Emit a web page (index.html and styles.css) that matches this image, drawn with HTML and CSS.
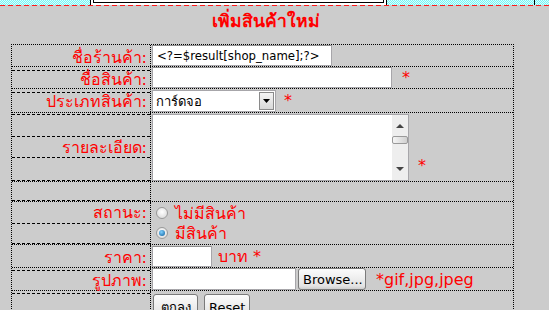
FILE: index.html
```html
<!DOCTYPE html>
<html lang="th">
<head>
<meta charset="utf-8">
<title>เพิ่มสินค้าใหม่</title>
<link rel="stylesheet" href="styles.css">
</head>
<body>
<div class="topbar">
  <div class="tb-cyan tb-left"></div>
  <div class="tb-box"><div class="tb-inner"></div></div>
  <div class="tb-cyan tb-mid"></div>
  <div class="tb-cyan tb-right"></div>
</div>
<div class="title">เพิ่มสินค้าใหม่</div>
<form class="form">
  <div class="row r1">
    <div class="lbl"><div class="lc grow">ชื่อร้านค้า:</div></div>
    <div class="fld"><input class="txt w-shop" type="text" value="<?=$result[shop_name];?>"></div>
  </div>
  <div class="row r2">
    <div class="lbl"><div class="lc grow">ชื่อสินค้า:</div></div>
    <div class="fld"><input class="txt w-name" type="text"><span class="star s-name">*</span></div>
  </div>
  <div class="row r3">
    <div class="lbl"><div class="lc grow">ประเภทสินค้า:</div></div>
    <div class="fld">
      <div class="select"><span class="sel-text">การ์ดจอ</span><span class="sel-btn"><svg width="9" height="5" viewBox="0 0 9 5"><path d="M1 0h7L4.5 4z" fill="#000"/></svg></span></div>
      <span class="star s-type">*</span>
    </div>
  </div>
  <div class="row r4">
    <div class="lbl">
      <div class="lc sub-a"></div>
      <div class="lc sub-b">รายละเอียด:</div>
      <div class="lc grow last"></div>
    </div>
    <div class="fld fld-top">
      <div class="tarea">
        <textarea class="ta"></textarea>
        <div class="sbar">
          <span class="sb-up"></span>
          <span class="sb-thumb"></span>
          <span class="sb-down"></span>
        </div>
      </div>
      <span class="star s-desc">*</span>
    </div>
  </div>
  <div class="row r5">
    <div class="lbl"><div class="lc grow"></div></div>
    <div class="fld"></div>
  </div>
  <div class="row r6">
    <div class="lbl">
      <div class="lc st-a">สถานะ:</div>
      <div class="lc grow last"></div>
    </div>
    <div class="fld fld-col">
      <label class="radio-line"><span class="radio"></span><span class="rtext">ไม่มีสินค้า</span></label>
      <label class="radio-line"><span class="radio on"></span><span class="rtext">มีสินค้า</span></label>
    </div>
  </div>
  <div class="row r7">
    <div class="lbl"><div class="lc grow">ราคา:</div></div>
    <div class="fld"><input class="txt w-price" type="text"><span class="unit">บาท *</span></div>
  </div>
  <div class="row r8">
    <div class="lbl"><div class="lc grow">รูปภาพ:</div></div>
    <div class="fld"><span class="txt w-file"></span><button type="button" class="btn b-browse">Browse...</button><span class="hint">*gif,jpg,jpeg</span></div>
  </div>
  <div class="row r9">
    <div class="lbl"><div class="lc grow nob"></div></div>
    <div class="fld fld-top"><button type="submit" class="btn b-ok">ตกลง</button><button type="reset" class="btn b-reset">Reset</button></div>
  </div>
</form>
</body>
</html>
```
FILE: styles.css
```css
html, body {
  margin: 0;
  padding: 0;
  background: #cccccc;
  overflow: hidden;
}
body {
  width: 549px;
  height: 310px;
  font-family: Tahoma, "DejaVu Sans", "Noto Sans", sans-serif;
}

/* top strip */
.topbar {
  display: flex;
  height: 5px;
  padding-bottom: 1px;
  background-image: repeating-linear-gradient(90deg, #ff1a1a 0 5px, transparent 5px 8px);
  background-size: 100% 1px;
  background-position: 0 5px;
  background-repeat: no-repeat;
}
.tb-cyan {
  height: 5px;
  background-color: #aaffff;
  background-image: repeating-conic-gradient(#77f4f4 0 25%, #d8ffff 0 50%);
  background-size: 2px 2px;
}
.tb-left { width: 90px; }
.tb-box {
  width: 295px;
  height: 5px;
  background: #fff;
  border-left: 1px solid #000;
  border-right: 1px solid #000;
}
.tb-inner {
  height: 2px;
  margin: 0 2px;
  border: 1px solid #000;
  border-top: 0;
}
.tb-mid {
  width: 147px;
  border-right: 1px solid #000;
}
.tb-right { flex: 1; }

.title {
  height: 38px;
  padding-left: 212px;
  color: #ff0000;
  font-weight: bold;
  font-size: 17.5px;
  line-height: 22px;
  padding-top: 4px;
  box-sizing: border-box;
}

/* form table */
.form {
  margin: 0 0 0 11px;
  width: 503px;
  border-top: 1px dotted #000;
  border-left: 1px dotted #000;
  border-right: 1px dotted #000;
  box-sizing: border-box;
}
.row {
  display: flex;
  border-bottom: 1px dotted #000;
  box-sizing: border-box;
}
.r1 { height: 22px; }
.r2 { height: 22px; }
.r3 { height: 24px; }
.r4 { height: 69px; }
.r5 { height: 20px; }
.r6 { height: 43px; }
.r7 { height: 23px; }
.r8 { height: 23px; }
.r9 { height: 40px; border-bottom: 0; }

.lbl {
  width: 138px;
  display: flex;
  flex-direction: column;
  border-right: 1px dotted #000;
}
.lc {
  display: flex;
  align-items: center;
  justify-content: flex-end;
  padding-right: 3px;
  color: #ff0000;
  font-size: 16px;
  border-bottom: 1px dashed #000;
  white-space: nowrap;
}
.lc.nob { border-bottom: 0; }
.grow { flex: 1; }
.sub-a { height: 23px; }
.sub-b { height: 20px; }
.st-a { height: 21px; }

.fld {
  flex: 1;
  display: flex;
  align-items: center;
  padding-left: 1px;
}
.fld-top { align-items: flex-start; }
.fld-col {
  flex-direction: column;
  align-items: flex-start;
  justify-content: center;
}

.txt {
  display: block;
  height: 21px;
  box-sizing: border-box;
  border: 1px solid #a7a6aa;
  border-top-color: #8f8f8f;
  background: #fff;
  font-family: "DejaVu Sans Condensed", "DejaVu Sans", sans-serif;
  font-size: 13px;
  padding: 0 4px;
  margin: 0;
  color: #000;
}
.w-shop { width: 180px; }
.w-name { width: 240px; }
.w-price { width: 60px; }
.w-file { width: 144px; height: 22px; }

.star {
  color: #ff0000;
  font-size: 16px;
}
.s-name { margin-left: 10px; }
.s-type { margin-left: 8px; }
.s-desc { margin-left: 9px; margin-top: 43px; }

.select {
  display: flex;
  width: 124px;
  height: 22px;
  box-sizing: border-box;
  margin-top: 1px;
  background: #fff;
  border: 1px solid #a7a6aa;
  align-items: center;
}
.sel-text {
  flex: 1;
  font-size: 13px;
  padding-left: 3px;
}
.sel-btn {
  width: 15px;
  height: 18px;
  margin-right: 1px;
  border: 1px solid #8a8a8a;
  background: linear-gradient(#f4f4f4, #d8d8d8);
  display: flex;
  align-items: center;
  justify-content: center;
  box-sizing: border-box;
}

.tarea {
  display: flex;
  width: 257px;
  height: 67px;
  box-sizing: border-box;
  margin-top: 1px;
  border: 1px solid #a7a6aa;
  background: #fff;
}
.ta {
  flex: 1;
  border: 0;
  margin: 0;
  resize: none;
  outline: none;
  background: #fff;
}
.sbar {
  width: 16px;
  background: #eeeeee;
  display: flex;
  flex-direction: column;
  align-items: center;
}
.sb-up {
  width: 0; height: 0;
  margin-top: 9px;
  border-left: 4px solid transparent;
  border-right: 4px solid transparent;
  border-bottom: 4px solid #444;
}
.sb-thumb {
  width: 14px;
  height: 6px;
  margin-top: 8px;
  border: 1px solid #999;
  border-radius: 2px;
  background: linear-gradient(90deg, #f5f5f5, #d0d0d0);
}
.sb-down {
  width: 0; height: 0;
  margin-top: auto;
  margin-bottom: 9px;
  border-left: 4px solid transparent;
  border-right: 4px solid transparent;
  border-top: 4px solid #444;
}

.radio-line {
  display: flex;
  align-items: center;
  height: 20px;
  padding-left: 4px;
}
.radio {
  width: 12px;
  height: 12px;
  box-sizing: border-box;
  border-radius: 50%;
  border: 1px solid #9a9a9a;
  background: radial-gradient(circle at 50% 40%, #ffffff, #d4d4d4);
  display: flex;
  align-items: center;
  justify-content: center;
}
.radio.on::after {
  content: "";
  width: 6px;
  height: 6px;
  border-radius: 50%;
  background: radial-gradient(circle at 40% 35%, #7fd0ff, #0a5c9a);
}
.rtext {
  color: #ff0000;
  font-size: 16px;
  margin-left: 7px;
}

.unit {
  color: #ff0000;
  font-size: 16px;
  margin-left: 6px;
}

.btn {
  height: 22px;
  box-sizing: border-box;
  border: 1px solid #7a7a7a;
  border-radius: 3px;
  background: linear-gradient(#fbfbfb, #e3e3e3 85%, #cfcfcf);
  font-family: Tahoma, "DejaVu Sans", sans-serif;
  font-size: 13px;
  color: #000;
  padding: 0 4px;
  margin: 0;
}
.b-browse { margin-left: 2px; width: 68px; }
.hint {
  color: #ff0000;
  font-size: 16px;
  margin-left: 10px;
}
.b-ok { margin-top: 3px; width: 45px; height: 26px; margin-left: 1px; }
.b-reset { margin-top: 3px; width: 46px; height: 26px; margin-left: 6px; }
```
